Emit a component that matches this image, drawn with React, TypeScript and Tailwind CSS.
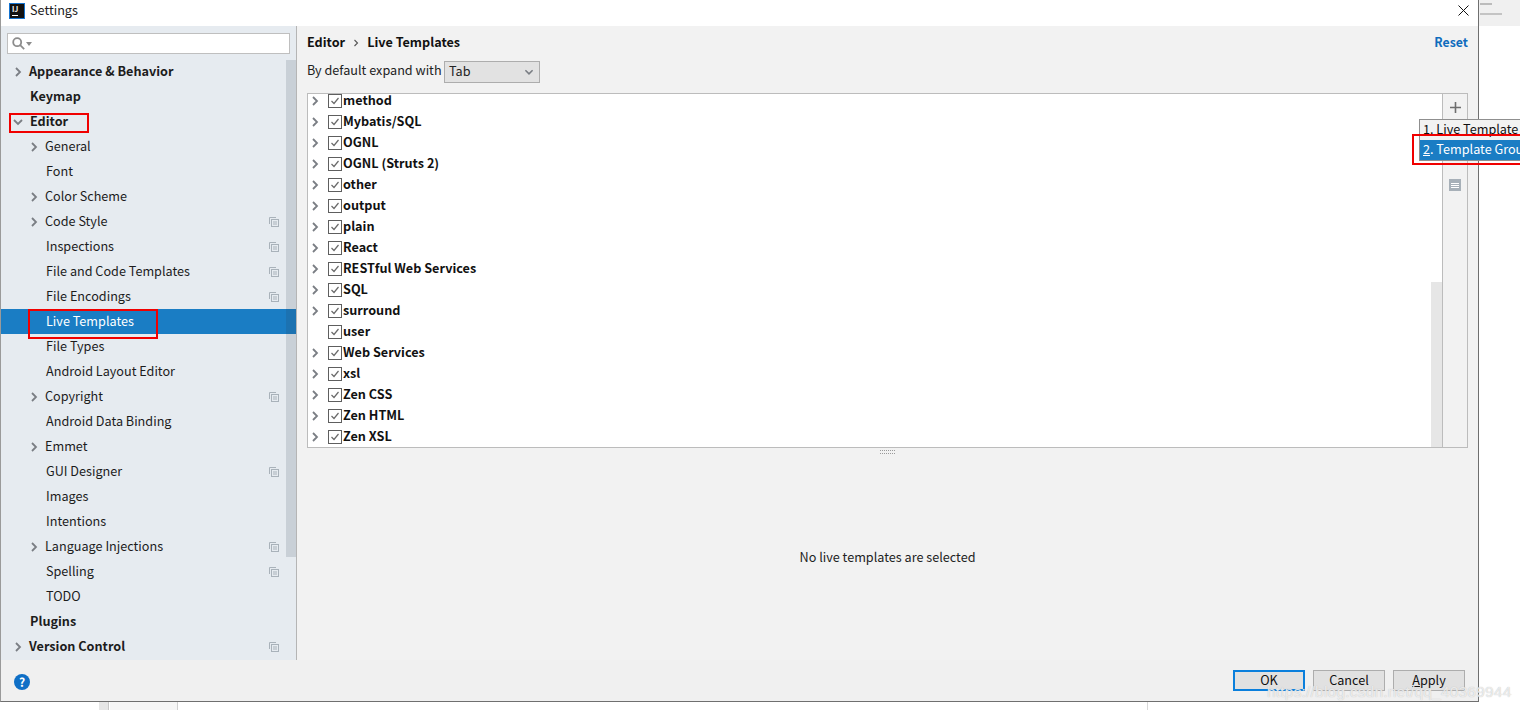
import React from "react";

const F = '"Noto Sans CJK SC","Noto Sans",sans-serif';

function Chevron({ down = false, className = "" }: { down?: boolean; className?: string }) {
  return (
    <svg width="10" height="10" viewBox="0 0 10 10" className={className} fill="none" stroke="#7a7e84" strokeWidth="1.8">
      {down ? <path d="M1 3l4 4 4-4" /> : <path d="M3 1l4 4-4 4" />}
    </svg>
  );
}

function CopyIcon() {
  return (
    <svg width="10" height="10" viewBox="0 0 10 10" fill="none" stroke="#a9b2ba" strokeWidth="1">
      <path d="M7 .5H.5V7" />
      <rect x="2.5" y="2.5" width="7" height="7" />
      <path d="M4 5h4M4 7h4" />
    </svg>
  );
}

type Item = { t: string; lvl: 0 | 1; arrow?: boolean; copy?: boolean; sel?: boolean; down?: boolean };
const items: Item[] = [
  { t: "Appearance & Behavior", lvl: 0, arrow: true },
  { t: "Keymap", lvl: 0 },
  { t: "Editor", lvl: 0, arrow: true, down: true },
  { t: "General", lvl: 1, arrow: true },
  { t: "Font", lvl: 1 },
  { t: "Color Scheme", lvl: 1, arrow: true },
  { t: "Code Style", lvl: 1, arrow: true, copy: true },
  { t: "Inspections", lvl: 1, copy: true },
  { t: "File and Code Templates", lvl: 1, copy: true },
  { t: "File Encodings", lvl: 1, copy: true },
  { t: "Live Templates", lvl: 1, sel: true },
  { t: "File Types", lvl: 1 },
  { t: "Android Layout Editor", lvl: 1 },
  { t: "Copyright", lvl: 1, arrow: true, copy: true },
  { t: "Android Data Binding", lvl: 1 },
  { t: "Emmet", lvl: 1, arrow: true },
  { t: "GUI Designer", lvl: 1, copy: true },
  { t: "Images", lvl: 1 },
  { t: "Intentions", lvl: 1 },
  { t: "Language Injections", lvl: 1, arrow: true, copy: true },
  { t: "Spelling", lvl: 1, copy: true },
  { t: "TODO", lvl: 1 },
  { t: "Plugins", lvl: 0 },
  { t: "Version Control", lvl: 0, arrow: true, copy: true },
];

const groups = ["method", "Mybatis/SQL", "OGNL", "OGNL (Struts 2)", "other", "output", "plain", "React", "RESTful Web Services", "SQL", "surround", "user", "Web Services", "xsl", "Zen CSS", "Zen HTML", "Zen XSL"];

function SideRow({ it }: { it: Item }) {
  const indent = it.lvl === 0 ? "pl-[12px]" : "pl-[28px]";
  return (
    <div className={`relative h-[25px] flex items-center pr-[17px] ${indent} ${it.sel ? "bg-[#1a7dc4] text-white" : "text-[#1c1c1c]"}`}>
      <div className="w-[16px] shrink-0 flex items-center">{it.arrow && <Chevron down={it.down} />}</div>
      <span className={`text-[12.65px] leading-none whitespace-nowrap ${it.lvl === 0 ? "font-bold" : ""} ${it.arrow && !it.down ? "" : "ml-[1px]"}`}>{it.t}</span>
      <div className="flex-1" />
      {it.copy && <CopyIcon />}
    </div>
  );
}

function GroupRow({ name }: { name: string }) {
  return (
    <div className="h-[21px] flex items-center pl-[2px]">
      <div className="w-[18px] shrink-0">{name !== "user" && <Chevron />}</div>
      <div className="w-[14px] h-[14px] border border-[#5e5e5e] bg-white flex items-center justify-center shrink-0">
        <svg width="10" height="10" viewBox="0 0 10 10" fill="none" stroke="#6a6a6a" strokeWidth="1.2"><path d="M1.5 5l2.5 2.5 4.5-5.5" /></svg>
      </div>
      <span className="ml-[1px] text-[12.65px] leading-none font-bold text-[#111]">{name}</span>
    </div>
  );
}

function Btn({ children, primary = false }: { children: React.ReactNode; primary?: boolean }) {
  return (
    <div className={`w-[72px] h-[21px] flex items-center justify-center bg-[#e1e1e1] text-[12.65px] leading-none text-[#111] ${primary ? "border-2 border-[#0a7fdc]" : "border border-[#adadad]"}`}>
      {children}
    </div>
  );
}

export default function App() {
  return (
    <div className="relative w-[1520px] h-[710px] overflow-hidden bg-white" style={{ fontFamily: F }}>
      {/* background behind the dialog */}
      <div className="absolute left-[1479px] top-0 w-[41px] h-[26px] bg-[#f0f0f0]">
        <div className="absolute left-[1px] top-[3px] w-[12px] h-[2px] bg-[#bcbcbc]" />
        <div className="absolute left-[1px] top-[13px] w-[22px] h-[2px] bg-[#c4c4c4]" />
      </div>
      <div className="absolute left-[99px] top-[702px] w-[10px] h-[8px] bg-[#e6e6e6] border-r border-[#c8c8c8]" />
      <div className="absolute left-[110px] top-[702px] w-[68px] h-[8px] bg-[#f6f6f6] border-r border-[#d0d0d0]" />
      <div className="absolute left-[1147px] top-[702px] w-[1px] h-[8px] bg-[#d8d8d8]" />

      <div className="w-[1479px] h-[702px] flex flex-col bg-white border-l border-r border-b border-l-[#9a9a9a] border-r-[#6f6f6f] border-b-[#6f6f6f]">
        {/* Title bar */}
        <div className="relative h-[26px] shrink-0 flex items-start bg-white pl-[8px] pr-[9px] pt-[3px]">
          <div className="w-[16px] h-[16px] bg-[#111] border border-[#1473d0] relative shrink-0">
            <span className="absolute left-[2px] top-[1px] text-[7px] leading-[8px] font-bold text-white">IJ</span>
            <div className="absolute left-[2px] bottom-[2px] w-[6px] h-[1px] bg-white" />
          </div>
          <span className="ml-[5px] text-[12.65px] leading-[14px] text-[#222]">Settings</span>
          <div className="flex-1" />
          <svg width="11" height="11" viewBox="0 0 11 11" stroke="#111" strokeWidth="1" fill="none" className="mt-[2px]"><path d="M.5.5l10 10M10.5.5l-10 10" /></svg>
        </div>

        {/* Main */}
        <div className="flex-1 flex min-h-0">
          {/* Sidebar */}
          <div className="relative w-[296px] shrink-0 flex flex-col bg-[#e6ebf0] border-r border-[#b5b5b5] overflow-hidden">
            <div className="h-[33px] shrink-0 pt-[7px] pl-[6px] pr-[6px]">
              <div className="h-[21px] bg-white border border-[#bfbfbf] flex items-center pl-[4px] gap-[1px]">
                <svg width="13" height="13" viewBox="0 0 13 13" fill="none" stroke="#8c8c8c" strokeWidth="1.8"><circle cx="5.2" cy="5.2" r="4" /><path d="M8.2 8.2l4 4" /></svg>
                <svg width="6" height="4" viewBox="0 0 6 4" fill="#8c8c8c"><path d="M0 0h6L3 4z" /></svg>
              </div>
            </div>
            {items.map((it) => (
              <SideRow key={it.t} it={it} />
            ))}
            <div className="absolute right-0 top-[34px] w-[10px] h-[497px] bg-[#26384a]/15" />
          </div>

          {/* Content */}
          <div className="flex-1 flex flex-col bg-[#f2f2f2] min-w-0">
            <div className="h-[33px] shrink-0 flex items-center justify-between pl-[10px] pr-[10px]">
              <div className="flex items-center text-[12.65px] leading-none font-bold text-[#111]">
                <span>Editor</span>
                <svg width="8" height="8" viewBox="0 0 8 8" fill="none" stroke="#555" strokeWidth="1.1" className="mx-[7px] mt-[1px]"><path d="M2.5 1l3 3-3 3" /></svg>
                <span>Live Templates</span>
              </div>
              <span className="text-[12.3px] leading-none font-bold text-[#0f6cbd]">Reset</span>
            </div>
            <div className="h-[23px] shrink-0 flex items-center pl-[10px] mt-[1px]">
              <span className="text-[12.65px] leading-none text-[#222] w-[137px] whitespace-nowrap pb-[2px]">By default expand with</span>
              <div className="w-[96px] h-[22px] bg-[#e2e2e2] border border-[#adadad] flex items-center justify-between pl-[4px] pr-[5px]">
                <span className="text-[12.65px] leading-none text-[#222]">Tab</span>
                <Chevron down className="scale-90" />
              </div>
            </div>
            <div className="h-[355px] shrink-0 mt-[10px] ml-[10px] mr-[10px] flex border border-[#bcbcbc] bg-white">
              <div className="relative flex-1 overflow-hidden">
                <div className="-mt-[4px]">
                  {groups.map((g) => (
                    <GroupRow key={g} name={g} />
                  ))}
                </div>
                <div className="absolute right-0 bottom-0 w-[11px] h-[165px] bg-[#e6e6e6]" />
              </div>
              <div className="w-[25px] shrink-0 bg-[#f2f2f2] border-l border-[#bcbcbc] flex flex-col items-center">
                <svg width="11" height="11" viewBox="0 0 11 11" stroke="#6e6e6e" strokeWidth="1.6" className="mt-[8px]"><path d="M5.5 0v11M0 5.5h11" /></svg>
                <div className="mt-[66px] w-[12px] h-[12px] bg-[#a7b0b8] flex flex-col items-center justify-center gap-[1px]">
                  <div className="w-[8px] h-[1px] bg-white" />
                  <div className="w-[8px] h-[1px] bg-white" />
                  <div className="w-[8px] h-[1px] bg-white" />
                </div>
              </div>
            </div>
            <div className="h-[8px] shrink-0 flex items-center justify-center">
              <div className="w-[15px] h-[4px] border-y border-dotted border-[#9a9a9a]" />
            </div>
            <div className="flex-1 flex items-center justify-center pb-[2px]">
              <span className="text-[12.65px] leading-none text-[#222]">No live templates are selected</span>
            </div>
          </div>
        </div>

        {/* Footer */}
        <div className="h-[41px] shrink-0 bg-[#f0f0f0] flex items-center pl-[13px] pr-[13px]">
          <div className="w-[16px] h-[16px] rounded-full bg-[#0f6fc6] flex items-center justify-center text-[12px] leading-none font-bold text-white mt-[3px]">?</div>
          <div className="flex-1" />
          <div className="flex gap-[8px]">
            <Btn primary>OK</Btn>
            <Btn>Cancel</Btn>
            <Btn><span><span className="underline">A</span>pply</span></Btn>
          </div>
        </div>
      </div>

      {/* Popup menu */}
      <div className="absolute left-[1419px] top-[119px] w-[110px] h-[42px] bg-[#f2f2f2] border border-[#8f8f8f] text-[12.65px] leading-none">
        <div className="h-[20px] flex items-center pl-[3px] pb-[2px] text-[#111] whitespace-nowrap"><span className="underline">1</span>. Live Template</div>
        <div className="h-[20px] flex items-center pl-[3px] pb-[2px] bg-[#1a7dc4] text-white whitespace-nowrap"><span className="underline">2</span>. Template Group...</div>
      </div>

      {/* Red annotations */}
      <div className="absolute left-[9px] top-[113px] w-[80px] h-[20px] border-2 border-[#f00000]" />
      <div className="absolute left-[28px] top-[309px] w-[130px] h-[30px] border-2 border-[#f00000]" />
      <div className="absolute left-[1412px] top-[134px] w-[120px] h-[31px] border-2 border-[#f00000]" />

      {/* Watermark */}
      <div className="absolute left-[1267px] top-[684px] text-[15.5px] leading-none tracking-[0.2px] text-white/70 [text-shadow:0_0_1px_#b4b4b4] whitespace-nowrap" style={{ fontFamily: '"Liberation Sans",sans-serif' }}>https://blog.csdn.net/qq_40369944</div>
    </div>
  );
}
